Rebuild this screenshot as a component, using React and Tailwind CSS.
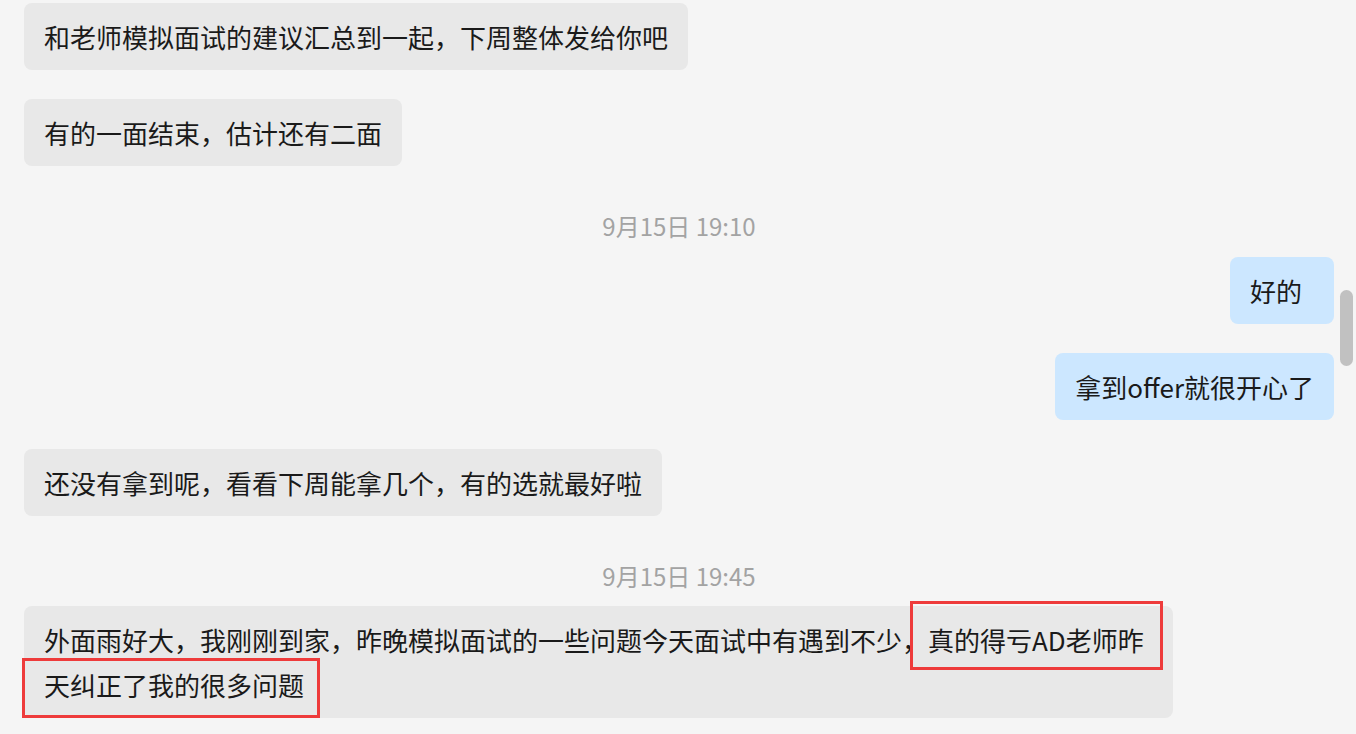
const font = { fontFamily: '"Noto Sans CJK SC", "Liberation Sans", sans-serif' };

function Bubble({ children, mine = false, className = "" }) {
  return (
    <div
      className={`rounded-lg py-[11px] pl-5 text-[26px] leading-[45px] text-[#1a1a1a] ${
        mine ? "bg-[#cce7ff]" : "bg-[#e8e8e8]"
      } ${className || "pr-5"}`}
    >
      {children}
    </div>
  );
}

function Stamp({ children, className = "" }) {
  return (
    <div className={`text-center text-[24px] leading-[30px] text-[#a3a3a3] ${className}`}>
      {children}
    </div>
  );
}

export default function App() {
  return (
    <div className="flex h-[734px] w-[1356px] overflow-hidden bg-[#f5f5f5]" style={font}>
      <div className="flex flex-1 flex-col pl-6 pt-[3px]">
        <div className="self-start">
          <Bubble>和老师模拟面试的建议汇总到一起，下周整体发给你吧</Bubble>
        </div>
        <div className="mt-[29px] self-start">
          <Bubble>有的一面结束，估计还有二面</Bubble>
        </div>
        <Stamp className="mt-[45px]">9月15日 19:10</Stamp>
        <div className="mt-4 self-end">
          <Bubble mine className="pr-8">好的</Bubble>
        </div>
        <div className="mt-[29px] self-end">
          <Bubble mine>拿到offer就很开心了</Bubble>
        </div>
        <div className="mt-[29px] self-start">
          <Bubble>还没有拿到呢，看看下周能拿几个，有的选就最好啦</Bubble>
        </div>
        <Stamp className="mt-[45px]">9月15日 19:45</Stamp>
        <div className="relative mt-[15px] w-[1149px]">
          <Bubble>
            外面雨好大，我刚刚到家，昨晚模拟面试的一些问题今天面试中有遇到不少，真的得亏AD老师昨
            <br />
            天纠正了我的很多问题
          </Bubble>
          <div className="absolute left-[886px] top-[-5px] h-[69px] w-[253px] border-[3px] border-[#ee3b3b]" />
          <div className="absolute left-[-2px] top-[52px] h-[60px] w-[298px] border-[3px] border-[#ee3b3b]" />
        </div>
      </div>
      <div className="w-[22px] pl-[6px] pt-[290px]">
        <div className="h-[76px] w-[13px] rounded-full bg-[#c1c1c1]" />
      </div>
    </div>
  );
}
